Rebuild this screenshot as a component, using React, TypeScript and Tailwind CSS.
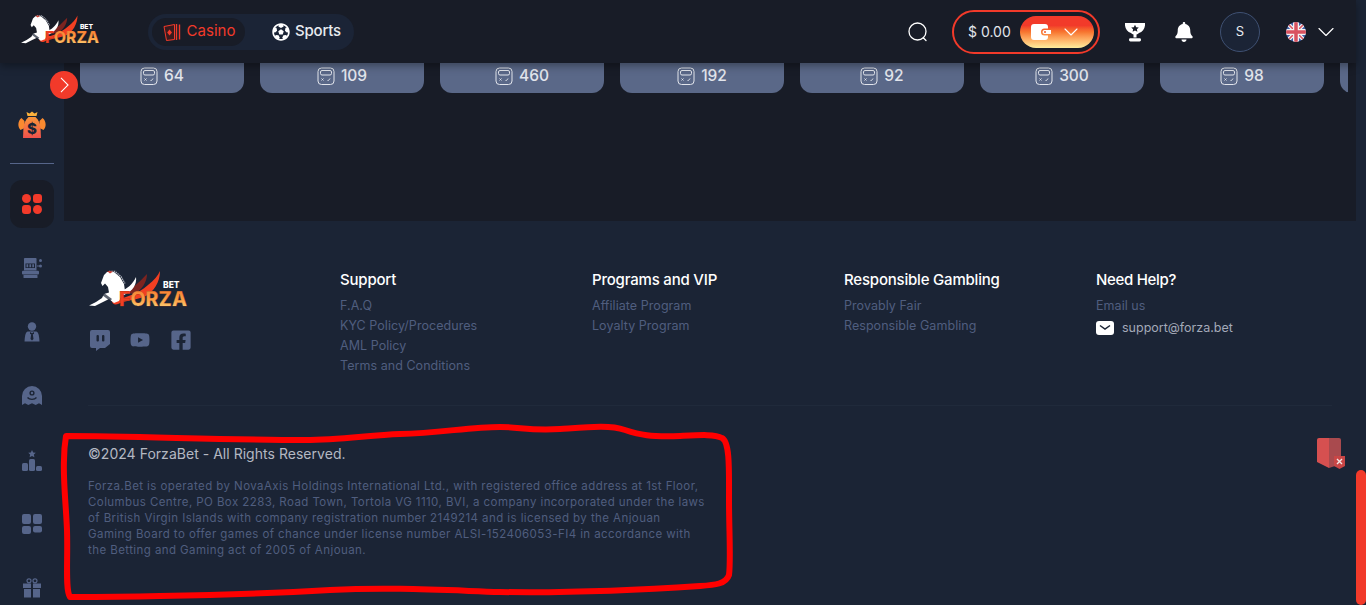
import * as React from "react"
import { ChevronDown } from "lucide-react"
import { FaBell, FaFacebookSquare, FaFutbol, FaYoutube } from "react-icons/fa"

const gameCounts = [64, 109, 460, 192, 92, 300, 98, 0]

const footerColumns = [
  { title: "Support", links: ["F.A.Q", "KYC Policy/Procedures", "AML Policy", "Terms and Conditions"] },
  { title: "Programs and VIP", links: ["Affiliate Program", "Loyalty Program"] },
  { title: "Responsible Gambling", links: ["Provably Fair", "Responsible Gambling"] },
]

function Logo({ id, className }: { id: string; className: string }) {
  return (
    <svg viewBox="0 0 100 44" className={className}>
      <defs>
        <linearGradient id={id} x1="0" y1="0" x2="0" y2="1">
          <stop offset="0" stopColor="#f5762f" />
          <stop offset="0.55" stopColor="#fba247" />
          <stop offset="1" stopColor="#fde08a" />
        </linearGradient>
      </defs>
      <path d="M40 22C48 18 53 12 59 6C59 14 54 22 45 27Z" fill="#7c2420" />
      <path d="M24 33C36 30 50 26 60 17C66 12 70 8 72 3C72 14 66 24 56 29C46 32 36 33 30 36C27 37 24 36 24 33Z" fill="#f23f22" />
      <path d="M33 23C39 21 45 16 48 9C49 16 45 23 36 27Z" fill="#fff" />
      <path d="M19 4L26 4L32 9L36 16L37 23L34 28L31 33L26 35L21 31L15 34L7 38L1 37.500L8 34L14 30L16 26L21 24.500L20 19L17 15.500L14.500 18L13 15L16 7Z" fill="#fff" />
      <path d="M21 3.500L27 3.500L33 8.500L37 15.500" fill="none" stroke="#a8adb8" strokeWidth="1.400" strokeDasharray="1.500 0.800" />
      <path d="M19 3L25 3.500L22 5.500Z" fill="#d23a2a" />
      <path d="M16 25L24 31L22 33L14 27Z" fill="#1b2435" opacity="0.7" />
      <text x="75" y="19.500" fontSize="8.500" fontWeight="800" fill="#fff" fontFamily="Inter, sans-serif">BET</text>
      <text x="31" y="38" fontSize="20" fontWeight="800" textLength="68" lengthAdjust="spacingAndGlyphs" fontFamily="Inter, sans-serif" fill={`url(#${id})`} stroke="#8a3415" strokeWidth="0.250">
        <tspan fill="#f23f22">F</tspan>ORZA
      </text>
    </svg>
  )
}

function GameIcon() {
  return (
    <svg viewBox="0 0 18 18" className="h-[18px] w-[18px]" fill="none" stroke="#e2e5ec" strokeWidth="1">
      <rect x="1" y="1" width="16" height="16.500" rx="3.500" />
      <rect x="3.500" y="3.500" width="11" height="4.500" rx="1.500" />
      <path d="M4.500 11.500l2 2M6.500 11.500l-2 2M10.500 13.500l1 0M13 11.500l-1.500 2" strokeWidth="0.900" />
    </svg>
  )
}

function CardsIcon() {
  return (
    <svg viewBox="0 0 20 18" className="h-[18px] w-[20px]" fill="none">
      <path d="M2 3.500L12.500 1.500V16.500L4.500 17.500Z" stroke="#f23a2a" strokeWidth="1" fill="#3a1a1e" />
      <path d="M7.500 6.500L10 9.500L7.500 12.500L5.200 9.500Z" fill="#f23a2a" />
      <path d="M14.500 1V17M17.500 1.500V16.500" stroke="#f23a2a" strokeWidth="1.400" />
    </svg>
  )
}

function MoneyBag() {
  return (
    <svg viewBox="0 0 28 28" className="h-[28px] w-[28px]">
      <defs>
        <linearGradient id="bag" x1="0" y1="0" x2="0" y2="1">
          <stop offset="0" stopColor="#f9963a" />
          <stop offset="1" stopColor="#f0514c" />
        </linearGradient>
      </defs>
      <path d="M8.500 1l3 1.600L14 0.500l2.500 2.100L19.500 1l-1 4h-9Z" fill="#fbb13c" />
      <path d="M3.500 7c-4 3-4 9-1 12l4-2V10Z M24.500 7c4 3 4 9 1 12l-4-2V10Z" fill="#f98a30" />
      <path d="M10.500 6h7c3 3 4.500 6 5 10l.5 11H5l.5-11c.5-4 2-7 5-10Z" fill="url(#bag)" />
      <text x="14" y="22.500" textAnchor="middle" fontSize="15" fontWeight="800" fill="#1b2435" fontFamily="Inter, sans-serif">$</text>
    </svg>
  )
}

function SlotIcon() {
  return (
    <svg viewBox="0 0 20 20" className="h-5 w-5" fill="#56658a">
      <path d="M3 0h10.500a1 1 0 0 1 1 1.500v11H2V1.500A1 1 0 0 1 3 0Z" />
      <rect x="3.500" y="5.500" width="9.500" height="4.500" fill="#1b2435" />
      <path d="M4.500 6.300h1.700v3H4.500ZM7.400 6.300h1.700v3H7.400ZM10.300 6.300h1.700v3H10.300Z" />
      <rect x="0" y="12.800" width="17" height="3.700" rx="1" />
      <rect x="1.500" y="17" width="14" height="3" rx="0.600" />
      <circle cx="18.500" cy="2.500" r="1.500" />
      <circle cx="18.500" cy="8" r="1.500" />
      <rect x="15" y="7.500" width="3" height="1" />
    </svg>
  )
}

function DealerIcon() {
  return (
    <svg viewBox="0 0 16 20" className="h-5 w-4" fill="#56658a">
      <circle cx="8" cy="4.500" r="4.200" />
      <path d="M3.500 9.500h9c1.500 1 2.500 2 3 10H.5c.5-8 1.500-9 3-10Z" />
      <path d="M6 10l2 1.200 2-1.200v2l-1.200.3L9.500 17 8 18.500 6.500 17l.7-4.700L6 12Z" fill="#1b2435" />
    </svg>
  )
}

function GhostIcon() {
  return (
    <svg viewBox="0 0 20 20" className="h-5 w-5" fill="#56658a">
      <path d="M0 10a10 10 0 0 1 20 0v9l-3-1.700-3.300 1.700-3.700-1.700-3.700 1.700L3 17.300 0 19Z" />
      <circle cx="10" cy="7" r="2.600" fill="#1b2435" />
      <circle cx="10" cy="7" r="1.200" />
      <path d="M5.500 11.500c2 2.500 7 2.500 9 0" fill="none" stroke="#1b2435" strokeWidth="1.300" />
    </svg>
  )
}

function PodiumIcon() {
  return (
    <svg viewBox="0 0 20 21" className="h-[21px] w-5" fill="#56658a">
      <path d="M10 0l1.200 2.400 2.600.4-1.900 1.800.5 2.600L10 6l-2.400 1.200.5-2.600-1.900-1.800 2.600-.4Z" />
      <rect x="7" y="9" width="6" height="12" rx="1.500" />
      <rect x="0" y="13" width="6" height="8" rx="1.500" />
      <rect x="14" y="16" width="6" height="5" rx="1.500" />
    </svg>
  )
}

function TilesIcon() {
  return (
    <svg viewBox="0 0 20 20" className="h-5 w-5" fill="#56658a">
      <rect x="0" y="0" width="9" height="10" rx="2" />
      <rect x="11" y="0" width="9" height="10" rx="2" />
      <rect x="0" y="12" width="9" height="8" rx="2" />
      <rect x="11" y="12" width="9" height="6.500" rx="2" />
    </svg>
  )
}

function GiftIcon() {
  return (
    <svg viewBox="0 0 18 20" className="h-5 w-[18px]" fill="#56658a">
      <circle cx="6" cy="2.800" r="2" fill="none" stroke="#56658a" strokeWidth="1.200" />
      <circle cx="12" cy="2.800" r="2" fill="none" stroke="#56658a" strokeWidth="1.200" />
      <rect x="0" y="5.500" width="8" height="4.500" />
      <rect x="10" y="5.500" width="8" height="4.500" />
      <rect x="1" y="11" width="7" height="8.500" />
      <rect x="10" y="11" width="7" height="8.500" />
    </svg>
  )
}

function UkFlag() {
  return (
    <svg viewBox="0 0 20 20" className="h-5 w-5">
      <defs>
        <clipPath id="flagClip">
          <circle cx="10" cy="10" r="10" />
        </clipPath>
      </defs>
      <g clipPath="url(#flagClip)">
        <rect width="20" height="20" fill="#3f5fa8" />
        <path d="M0 0L20 20M20 0L0 20" stroke="#f2f2f2" strokeWidth="4" />
        <path d="M0 0L20 20M20 0L0 20" stroke="#d9525f" strokeWidth="1.500" />
        <path d="M10 0V20M0 10H20" stroke="#f2f2f2" strokeWidth="6" />
        <path d="M10 0V20M0 10H20" stroke="#d9525f" strokeWidth="3.500" />
      </g>
    </svg>
  )
}

function TrophyIcon() {
  return (
    <svg viewBox="0 0 20 20" className="h-5 w-5" fill="#fff">
      <path d="M0 1h20c.5 5-2 8.500-6 10-.8.800-1.500 1.200-2.500 1.400v3.100h-3v-3.100c-1-.2-1.700-.6-2.500-1.400C2 9.500-.5 6 0 1Z" />
      <path d="M10 2.800l1.200 2.400 2.600.3-1.900 1.800.5 2.500L10 8.600l-2.400 1.200.5-2.500L6.200 5.500l2.600-.3Z" fill="#181c27" />
      <rect x="4" y="16.300" width="12" height="3.200" rx="1.400" />
    </svg>
  )
}

function SearchIcon() {
  return (
    <svg viewBox="0 0 20 20" className="h-5 w-5" fill="none" stroke="#fff" strokeWidth="1.300">
      <circle cx="9.500" cy="9.500" r="8.500" />
      <path d="M15.500 16l2.500 2.500" strokeLinecap="round" />
    </svg>
  )
}

function WalletIcon() {
  return (
    <svg viewBox="0 0 20 16" className="h-4 w-5" fill="#fff">
      <path d="M3 0h11a3 3 0 0 1 3 3v1.500h-3.500a3.500 3.500 0 0 0 0 7H17V13a3 3 0 0 1-3 3H3a3 3 0 0 1-3-3V3a3 3 0 0 1 3-3Z" />
      <path d="M13.500 6H20v4h-6.500a2 2 0 0 1 0-4Z" />
      <circle cx="14" cy="8" r="1" fill="#f2552a" />
    </svg>
  )
}

function TwitchIcon() {
  return (
    <svg viewBox="0 0 20 21" className="h-[21px] w-5" fill="#56658a">
      <path d="M2 0h16a2 2 0 0 1 2 2v12l-5 4h-5l-4 3v-3H2a2 2 0 0 1-2-2V2a2 2 0 0 1 2-2Z" />
      <rect x="6.500" y="5" width="2.400" height="6.500" rx="1" fill="#1b2435" />
      <rect x="12" y="5" width="2.400" height="6.500" rx="1" fill="#1b2435" />
    </svg>
  )
}

function SealIcon() {
  return (
    <svg viewBox="0 0 30 34" className="h-[34px] w-[30px]">
      <path d="M1 2a2 2 0 0 1 2-2h10v30L1 24Z" fill="#d65050" />
      <path d="M13 0h10a2 2 0 0 1 2 2v24l-12 4Z" fill="#a94a4e" />
      <path d="M18 18h11v10l-5.500 3-5.500-3Z" fill="#c94646" />
      <path d="M21 21l5 5M26 21l-5 5" stroke="#f3e6e6" strokeWidth="1.400" />
    </svg>
  )
}

function SidebarTile({ active, children }: { active?: boolean; children: React.ReactNode }) {
  return (
    <div className={active ? "flex h-12 w-11 items-center justify-center rounded-xl bg-[#181c27]" : "flex h-12 w-11 shrink-0 items-center justify-center"}>
      {children}
    </div>
  )
}

function Header() {
  return (
    <header className="relative z-10 flex h-[63px] shrink-0 items-center bg-[#181c27] pl-5 pr-4 shadow-[0_3px_8px_rgba(0,0,0,0.35)]">
      <Logo id="logoTop" className="h-[35px] w-[80px] -translate-y-[1px]" />
      <nav className="ml-[48px] flex h-9 w-[206px] items-center rounded-full bg-[#1b2436] px-1 text-[15px]">
        <div className="flex h-7 w-[93px] items-center justify-center gap-[5px] rounded-full bg-[#181c27] text-[#f23a2a]">
          <CardsIcon />
          <span>Casino</span>
        </div>
        <div className="ml-[27px] flex items-center gap-[5px] text-[#e8ebf0]">
          <FaFutbol className="text-[18px] text-white" />
          <span className="font-medium tracking-[-0.2px]">Sports</span>
        </div>
      </nav>
      <div className="ml-auto flex items-center">
        <SearchIcon />
        <div className="ml-[24px] flex h-[44px] w-[148px] items-center rounded-full border-2 border-[#f23a2a] pl-[14px] pr-1">
          <span className="text-sm text-[#e2e5ec]">$ 0.00</span>
          <div className="ml-auto flex h-8 w-[74px] items-center justify-center gap-[8px] rounded-full bg-gradient-to-b from-[#f23a2a] from-30% via-[#f7762f] to-[#fdec9c]">
            <WalletIcon />
            <ChevronDown className="h-6 w-6 text-white" strokeWidth={1.100} />
          </div>
        </div>
        <div className="ml-[25px]">
          <TrophyIcon />
        </div>
        <FaBell className="ml-[29px] text-[20px] text-white" />
        <div className="ml-[26px] flex h-10 w-10 items-center justify-center rounded-full border border-[#3f5173] bg-[#1b2436] text-[13px] text-[#e8ebf0]">S</div>
        <div className="ml-[26px]">
          <UkFlag />
        </div>
        <ChevronDown className="ml-[6px] h-7 w-7 text-white" strokeWidth={1} />
      </div>
    </header>
  )
}

function Sidebar() {
  return (
    <aside className="flex w-16 shrink-0 flex-col items-center gap-4 overflow-hidden bg-[#1b2435] pt-[40px] shadow-[2px_0_6px_rgba(0,0,0,0.1)]">
      <div className="flex h-11 w-11 shrink-0 items-center justify-center rounded-xl">
        <MoneyBag />
      </div>
      <div className="h-px w-11 shrink-0 bg-[#56658a]" />
      <div className="flex shrink-0 flex-col items-center gap-4">
        <SidebarTile active>
          <div className="grid grid-cols-2 gap-[2px]">
            <span className="h-[9px] w-[9px] rounded-full bg-[#f23a2a]" />
            <span className="h-[9px] w-[9px] rounded-[3px] bg-[#f23a2a]" />
            <span className="h-[9px] w-[9px] rounded-[3px] bg-[#f23a2a]" />
            <span className="h-[9px] w-[9px] rounded-full bg-[#f23a2a]" />
          </div>
        </SidebarTile>
        <SidebarTile><SlotIcon /></SidebarTile>
        <SidebarTile><DealerIcon /></SidebarTile>
        <SidebarTile><GhostIcon /></SidebarTile>
        <SidebarTile><PodiumIcon /></SidebarTile>
        <SidebarTile><TilesIcon /></SidebarTile>
        <SidebarTile><GiftIcon /></SidebarTile>
      </div>
    </aside>
  )
}

function Games() {
  return (
    <section className="h-[158px] shrink-0 bg-[#181c27] pl-4 pr-2">
      <div className="flex gap-4 overflow-hidden">
        {gameCounts.map((count, i) => (
          <div key={i} className="flex h-[30px] w-[164px] shrink-0 items-center justify-center gap-[6px] rounded-b-xl bg-[#5a6888] pb-[4px] text-[15.500px] font-medium text-[#e2e5ec]">
            {count > 0 && <GameIcon />}
            {count > 0 && <span>{count}</span>}
          </div>
        ))}
      </div>
    </section>
  )
}

function Footer() {
  return (
    <footer className="flex-1 bg-[#1b2435] px-6 pt-[47px]">
      <div className="flex h-[138px] border-b border-[#202a3b]">
        <div className="w-[252px] shrink-0">
          <Logo id="logoBottom" className="h-[44px] w-[100px]" />
          <div className="mt-[17px] flex items-center gap-5 pl-[2px]">
            <TwitchIcon />
            <FaYoutube className="text-[20px] text-[#56658a]" />
            <FaFacebookSquare className="text-[22px] text-[#56658a]" />
          </div>
        </div>
        {footerColumns.map((col) => (
          <div key={col.title} className="w-[252px] shrink-0 pt-[2px]">
            <h3 className="mb-[6px] text-[15px] leading-5 font-medium tracking-[-0.2px] text-white">{col.title}</h3>
            {col.links.map((link) => (
              <p key={link} className="text-[12.500px] leading-5 tracking-[0.05px] text-[#505e7f]">{link}</p>
            ))}
          </div>
        ))}
        <div className="shrink-0 pt-[2px]">
          <h3 className="mb-[6px] text-[15px] leading-5 font-medium tracking-[-0.3px] text-white">Need Help?</h3>
          <p className="text-[12.500px] leading-5 tracking-[0.05px] text-[#505e7f]">Email us</p>
          <div className="mt-[2px] flex items-center gap-2 text-[12.500px] leading-5 text-[#a3a9b8]">
            <svg viewBox="0 0 18 14" className="h-[14px] w-[18px]">
              <rect width="18" height="14" rx="3" fill="#fff" />
              <path d="M4 4.500l5 3.500 5-3.500" fill="none" stroke="#1b2435" strokeWidth="1.500" />
            </svg>
            <span>support@forza.bet</span>
          </div>
        </div>
      </div>
      <div className="flex pt-[38px]">
        <div className="w-[620px] shrink-0">
          <p className="text-sm leading-5 tracking-[0.03px] text-[#b4b8c2]">©2024 ForzaBet - All Rights Reserved.</p>
          <p className="mt-[14px] w-[619px] text-[11.500px] leading-4 tracking-[0.42px] text-[#505e7f]">
            Forza.Bet is operated by NovaAxis Holdings International Ltd., with registered office address at 1st Floor, Columbus Centre, PO Box 2283, Road Town, Tortola VG 1110, BVI, a company incorporated under the laws of British Virgin Islands with company registration number 2149214 and is licensed by the Anjouan Gaming Board to offer games of chance under license number ALSI-152406053-FI4 in accordance with the Betting and Gaming act of 2005 of Anjouan.
          </p>
        </div>
        <div className="ml-auto mr-[-14px] mt-[-6px]">
          <SealIcon />
        </div>
      </div>
    </footer>
  )
}

export default function App() {
  return (
    <div className="relative flex h-[605px] w-[1366px] overflow-hidden bg-[#1b2435] [font-family:Inter,sans-serif]">
      <div className="flex min-w-0 flex-1 flex-col">
        <Header />
        <div className="flex min-h-0 flex-1">
          <Sidebar />
          <main className="flex min-w-0 flex-1 flex-col">
            <Games />
            <Footer />
          </main>
        </div>
      </div>
      <div className="relative w-[10px] shrink-0 bg-[#1b2435]">
        <div className="absolute bottom-0 left-0 top-[470px] w-[10px] rounded-full bg-[#f23a2a]" />
      </div>
      <button className="absolute left-[50px] top-[71px] z-20 flex h-7 w-7 items-center justify-center rounded-full bg-[#f23a2a] text-white">
        <svg viewBox="0 0 10 18" className="h-4 w-[9px]" fill="none" stroke="#fff" strokeWidth="1.200">
          <path d="M1 1l8 8-8 8" />
        </svg>
      </button>
      {/* red marker scribble drawn over the screenshot */}
      <svg className="pointer-events-none absolute left-0 top-0 z-30 h-[605px] w-[1366px]" viewBox="0 0 1366 605" fill="none">
        <path
          d="M66 436C130 436 230 440 305 440C340 440 370 435 400 434C440 433 470 427 500 427C520 427 530 431 560 429C590 427 610 425 625 430C640 435 650 437 680 436C700 435 715 434 722 438C730 442 729 470 729 500C729 530 731 560 729 575C726 584 715 585 700 586C640 590 560 593 500 592C440 590 390 587 330 590C280 593 220 595 160 596C120 597 90 597 70 597C65 590 68 560 67 530C66 505 63 480 64 460C64 450 65 442 66 436Z"
          stroke="#ff0000"
          strokeWidth="6"
          strokeLinejoin="round"
        />
      </svg>
    </div>
  )
}
